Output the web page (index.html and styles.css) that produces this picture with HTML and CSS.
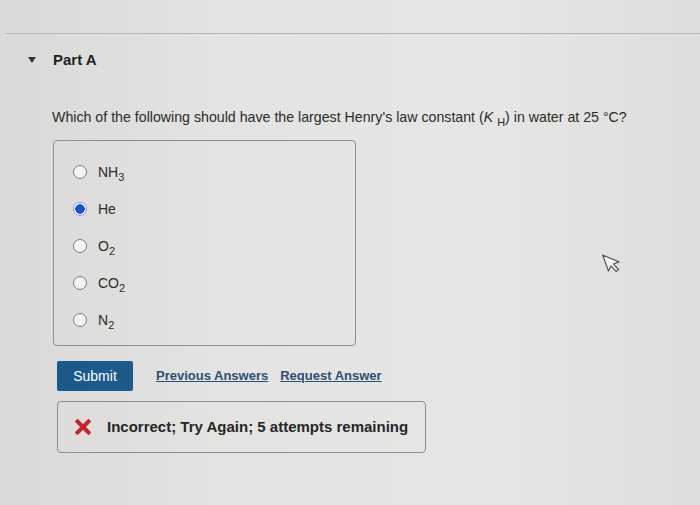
FILE: index.html
```html
<!DOCTYPE html>
<html lang="en">
<head>
    <meta charset="UTF-8">
    <title>Part A</title>
    <link rel="stylesheet" href="styles.css">
</head>
<body>
    <div class="divider"></div>
    <div class="part-header">
        <span class="caret"></span>
        <h2>Part A</h2>
    </div>

    <p class="question">Which of the following should have the largest Henry's law constant (<i>K</i> <sub>H</sub>) in water at 25 °C?</p>

    <div class="choices">
        <label class="choice"><span class="radio"></span><span>NH<sub>3</sub></span></label>
        <label class="choice"><span class="radio checked"></span><span>He</span></label>
        <label class="choice"><span class="radio"></span><span>O<sub>2</sub></span></label>
        <label class="choice"><span class="radio"></span><span>CO<sub>2</sub></span></label>
        <label class="choice"><span class="radio"></span><span>N<sub>2</sub></span></label>
    </div>

    <div class="actions">
        <button class="submit" type="button">Submit</button>
        <a class="link" href="#">Previous Answers</a>
        <a class="link" href="#">Request Answer</a>
    </div>

    <div class="feedback">
        <svg class="x-icon" width="16" height="16" viewBox="0 0 16 16">
            <path d="M2.5 2.5 L13.5 13.5 M13.5 2.5 L2.5 13.5" stroke="#c8232c" stroke-width="4" stroke-linecap="square"/>
        </svg>
        <span>Incorrect; Try Again; 5 attempts remaining</span>
    </div>

    <svg class="cursor" width="20" height="26" viewBox="0 0 20 26">
        <path d="M3 2 L3 19 L7 15 L10 22 L13 21 L10 14 L16 14 Z" fill="#f2f2f2" stroke="#555" stroke-width="1.2" stroke-linejoin="round"/>
    </svg>
</body>
</html>
```

FILE: styles.css
```css
body {
    margin: 0;
    height: 505px;
    overflow: hidden;
    position: relative;
    font-family: "Liberation Sans", Arial, sans-serif;
    color: #2b2b2b;
    background: linear-gradient(90deg, #d9d9d8 0%, #e3e3e2 30%, #e6e6e5 70%, #dededd 100%);
}

.divider {
    height: 1px;
    margin: 33px 0 0 5px;
    background-color: #b5b5b5;
}

.part-header {
    display: flex;
    align-items: center;
    gap: 17px;
    padding: 17px 0 0 28px;
}

.caret {
    width: 0;
    height: 0;
    border-left: 4px solid transparent;
    border-right: 4px solid transparent;
    border-top: 6px solid #333;
}

.part-header h2 {
    margin: 0;
    font-size: 15px;
    font-weight: bold;
    line-height: 18px;
    color: #222;
}

.question {
    margin: 39px 0 0 52px;
    font-size: 14.2px;
    line-height: 18px;
}

.question sub {
    font-size: 11px;
}

.choices {
    width: 303px;
    height: 206px;
    margin: 9px 0 0 53px;
    padding-top: 22px;
    border: 1px solid #8d8d8d;
    border-radius: 4px;
    box-sizing: border-box;
    display: flex;
    flex-direction: column;
    gap: 18px;
}

.choice {
    display: flex;
    align-items: center;
    gap: 11px;
    padding-left: 19px;
    font-size: 14px;
    line-height: 19px;
    color: #2b2b2b;
}

.choice sub {
    font-size: 11px;
    line-height: 0;
}

.radio {
    width: 12px;
    height: 12px;
    border: 1.5px solid #7a7a7a;
    border-radius: 50%;
    background: #f4f4f4;
    flex-shrink: 0;
}

.radio.checked {
    border-color: #7da2e8;
    background: radial-gradient(circle, #1450d8 0 4.5px, #ffffff 5px);
}

.actions {
    display: flex;
    align-items: center;
    margin: 15px 0 0 57px;
}

.submit {
    width: 76px;
    height: 30px;
    border: none;
    border-radius: 2px;
    background-color: #1c5a8c;
    color: #ffffff;
    font-family: inherit;
    font-size: 14px;
}

.link {
    margin-left: 23px;
    font-size: 13px;
    font-weight: bold;
    color: #2c4f74;
    text-decoration: underline;
}

.link + .link {
    margin-left: 12px;
}

.feedback {
    display: flex;
    align-items: center;
    gap: 16px;
    width: 369px;
    height: 52px;
    margin: 10px 0 0 57px;
    padding-left: 17px;
    box-sizing: border-box;
    border: 1px solid #8d8d8d;
    border-radius: 4px;
    font-size: 15px;
    font-weight: bold;
    color: #262626;
}

.cursor {
    position: absolute;
    left: 603px;
    top: 250px;
    transform: rotate(-20deg);
}
```
